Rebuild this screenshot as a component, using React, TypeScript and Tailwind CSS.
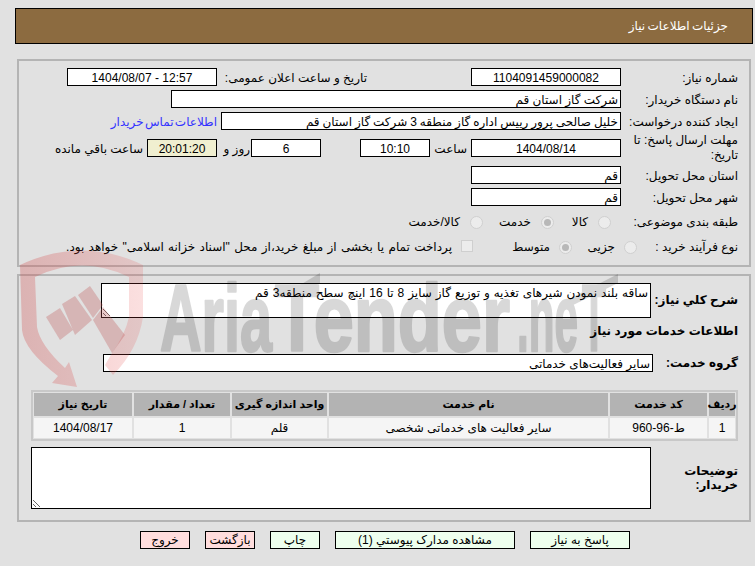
const inputCls = 'h-[18px] border border-black text-center leading-[15px] shrink-0 pt-[1px]'

function Field({ w, children, cls = 'text-center' }: { w: string; children?: string; cls?: string }) {
  return <div className={`h-[18px] border border-black bg-white leading-[16px] pt-[1px] shrink-0 overflow-hidden whitespace-nowrap px-[2px] ${w} ${cls}`}>{children}</div>
}

function Label({ w, children }: { w: string; children: string }) {
  return <div className={`shrink-0 pt-[2px] ${w}`}>{children}</div>
}

function Radio({ checked }: { checked?: boolean }) {
  return (
    <span className="w-[13px] h-[13px] rounded-full border border-[#d0d0d0] bg-[#ececec] flex items-center justify-center shrink-0">
      {checked && <span className="w-[7px] h-[7px] rounded-full bg-[#b8b8b8]" />}
    </span>
  )
}

function WmText({ x, len, children }: { x: number; len: number; children: string }) {
  return (
    <text
      x={x}
      y="351"
      direction="ltr"
      textLength={len}
      lengthAdjust="spacingAndGlyphs"
      fontFamily="'Liberation Sans', sans-serif"
      fontWeight="700"
      fontSize="95"
      stroke="#000"
      strokeWidth="2.5"
      strokeLinejoin="round"
    >
      {children}
    </text>
  )
}

// logo watermark lies over the whole form, see-through
function Watermark() {
  return (
    <svg className="absolute left-0 top-[245px] z-20 pointer-events-none" width="640" height="150" viewBox="0 245 640 150">
      <defs>
        <linearGradient id="sh" x1="0" y1="0" x2="1" y2="0">
          <stop offset="0" stopColor="#d05151" stopOpacity="0.32" />
          <stop offset="1" stopColor="#e63c3c" stopOpacity="0.16" />
        </linearGradient>
      </defs>
      <path
        fillRule="evenodd"
        fill="url(#sh)"
        d="M20 265 Q82 236 143 265 L143 317 Q138 350 113 375 L105 365 L112 353 Q125 335 129 317 L129 277 Q82 254 35 277 L37 327 Q40 345 65 368 L69 362 L77 387 L52 383 L58 376 Q24 350 22 330 Z"
      />
      <g fill="#be5050" fillOpacity="0.3">
        <path d="M46 317 L60 308 L73 330 L60 340 Z" />
        <path d="M62 304 L75 296 L92 320 L75 335 Z" />
        <path d="M78 295 L90 286 L103 305 L93 318 Z" />
        <path d="M93 320 L103 307 L125 335 L112 353 Z" />
      </g>
      <g fill="#000" opacity="0.15">
        <WmText x={160} len={112}>Aria</WmText>
        <WmText x={275} len={235}>Tender</WmText>
        <WmText x={517} len={61}>.ne</WmText>
        <WmText x={582} len={24}>T</WmText>
        <path d="M295 288 L320 273 L320 283 L295 297 Z" />
        <path d="M567 300 L618 274 L618 283 L567 308 Z" />
      </g>
    </svg>
  )
}

export default function App() {
  return (
    <div dir="rtl" className="relative min-h-[566px] h-[566px] overflow-hidden bg-[#e1e1e1] pt-2 pr-[2px] pl-[15px] text-[12px] leading-[15px] text-black font-['Liberation_Sans','DejaVu_Sans',sans-serif]">
      <Watermark />
      <div className="relative z-10">
        <div className="h-9 border border-black bg-[#8c6b40] text-white flex items-center pr-[24px] [word-spacing:-1px]">جزئیات اطلاعات نیاز</div>

        <div className="mx-[2px] mt-[15px] h-[208px] border-2 border-[#b4b4b4] pt-[7px] pr-[11px]">
          <div className="flex flex-col gap-1">
            <div className="flex items-center">
              <Label w="w-[117px]">شماره نیاز:</Label>
              <Field w="w-[150px]">1104091459000082</Field>
              <Label w="w-[150px] mr-[104px]">تاریخ و ساعت اعلان عمومی:</Label>
              <Field w="w-[150px]">12:57 - 1404/08/07</Field>
            </div>
            <div className="flex items-center">
              <Label w="w-[117px]">نام دستگاه خریدار:</Label>
              <Field w="w-[450px]" cls="text-right">شرکت گاز استان قم</Field>
            </div>
            <div className="flex items-center">
              <Label w="w-[117px] whitespace-nowrap">ایجاد کننده درخواست:</Label>
              <Field w="w-[400px]" cls="text-right [word-spacing:-0.4px]">خلیل صالحی پرور رییس اداره گاز منطقه 3 شرکت گاز استان قم</Field>
              <a className="mr-[4px] pt-[2px] text-[#3333ff] whitespace-nowrap [word-spacing:-2px]">اطلاعات تماس خریدار</a>
            </div>
            <div className="flex items-center h-[28px]">
              <div className="w-[117px] shrink-0">مهلت ارسال پاسخ: تا تاریخ:</div>
              <Field w="w-[150px]">1404/08/14</Field>
              <Label w="w-[41px] pr-[4px]">ساعت</Label>
              <Field w="w-[70px]">10:10</Field>
              <div className="w-[39px] shrink-0" />
              <Field w="w-[70px]">6</Field>
              <Label w="w-[34px] pr-[1px]">روز و</Label>
              <Field w="w-[70px]" cls="text-center !bg-[#f0efd0]">20:01:20</Field>
              <div className="pr-[4px] pt-[2px] whitespace-nowrap">ساعت باقي مانده</div>
            </div>
            <div className="flex items-center">
              <Label w="w-[117px]">استان محل تحویل:</Label>
              <Field w="w-[150px]" cls="text-right">قم</Field>
            </div>
            <div className="flex items-center">
              <Label w="w-[117px]">شهر محل تحویل:</Label>
              <Field w="w-[150px]" cls="text-right">قم</Field>
            </div>
            <div className="flex items-center h-5 mt-[2px]">
              <div className="w-[127px] shrink-0">طبقه بندی موضوعی:</div>
              <div className="w-[57px] shrink-0 flex items-center gap-[10px]"><Radio /><span>کالا</span></div>
              <div className="w-[71px] shrink-0 flex items-center gap-[10px]"><Radio checked /><span>خدمت</span></div>
              <div className="flex items-center gap-[10px]"><Radio /><span>کالا/خدمت</span></div>
            </div>
            <div className="flex items-center h-5 mt-[1px]">
              <div className="w-[101px] shrink-0">نوع فرآیند خرید :</div>
              <div className="w-[65px] shrink-0 flex items-center gap-[9px]"><Radio /><span>جزیی</span></div>
              <div className="w-[99px] shrink-0 flex items-center gap-[9px]"><Radio checked /><span>متوسط</span></div>
              <span className="w-[12px] h-[12px] border border-[#cfcfcf] bg-[#ececec] shrink-0 mb-[3px]" />
              <span className="mr-[9px] whitespace-nowrap [word-spacing:1px]">پرداخت تمام یا بخشی از مبلغ خرید،از محل "اسناد خزانه اسلامی" خواهد بود.</span>
            </div>
          </div>
        </div>

        <div className="mx-[2px] mt-[7px] h-[248px] border-2 border-[#b4b4b4] pt-[7px] pr-[11px] font-bold">
          <div className="flex items-center h-[35px]">
            <div className="w-[87px] shrink-0">شرح کلي نیاز:</div>
            <textarea
              readOnly
              className="block w-[550px] h-[35px] border border-black bg-white font-normal px-[2px] py-[2px] leading-[15px] outline-none [word-spacing:0.6px]"
              value="ساقه بلند نمودن شیرهای تغذیه و توزیع گاز سایز 8 تا 16 اینچ سطح منطقه3 قم"
            />
          </div>
          <div className="h-[15px] mt-[6px]">اطلاعات خدمات مورد نیاز</div>
          <div className="flex items-center mt-[15px]">
            <div className="w-[85px] shrink-0">گروه خدمت:</div>
            <Field w="w-[550px]" cls="text-right font-normal">سایر فعالیت‌های خدماتی</Field>
          </div>
          <div className="w-[707px] h-[51px] mt-[18px] border-2 border-[#c8c8c8] p-[1px] grid grid-cols-[26px_97px_279px_95px_96px_98px] grid-rows-[23px_20px] gap-x-[2px] gap-y-[2px] text-center">
            {['ردیف', 'کد خدمت', 'نام خدمت', 'واحد اندازه گیری', 'تعداد / مقدار', 'تاریخ نیاز'].map(h => (
              <div key={h} className="bg-[#b3b3b3] text-[11px] flex items-center justify-center whitespace-nowrap">{h}</div>
            ))}
            {['1', 'ط-96-960', 'سایر فعالیت های خدماتی شخصی', 'قلم', '1', '1404/08/17'].map((c, i) => (
              <div key={i} className="bg-[#f5f5f5] font-normal flex items-center justify-center whitespace-nowrap">{c}</div>
            ))}
          </div>
          <div className="flex items-center mt-[6px]">
            <div className="w-[87px] shrink-0 pl-[20px] leading-[14px]">توضیحات خریدار:</div>
            <textarea readOnly className="block w-[620px] h-[62px] border border-black bg-white font-normal outline-none" value="" />
          </div>
        </div>

        <div className="flex gap-[15px] mt-[9px] mr-[123px]">
          <button className={`${inputCls} w-[100px] bg-[#eeffee]`}>پاسخ به نیاز</button>
          <button className={`${inputCls} w-[180px] bg-[#eeffee]`}>مشاهده مدارک پیوستي (1)</button>
          <button className={`${inputCls} w-[50px] bg-[#eeffee]`}>چاپ</button>
          <button className={`${inputCls} w-[50px] bg-[#ffdddd]`}>بازگشت</button>
          <button className={`${inputCls} w-[50px] bg-[#ffdddd]`}>خروج</button>
        </div>
      </div>
    </div>
  )
}
